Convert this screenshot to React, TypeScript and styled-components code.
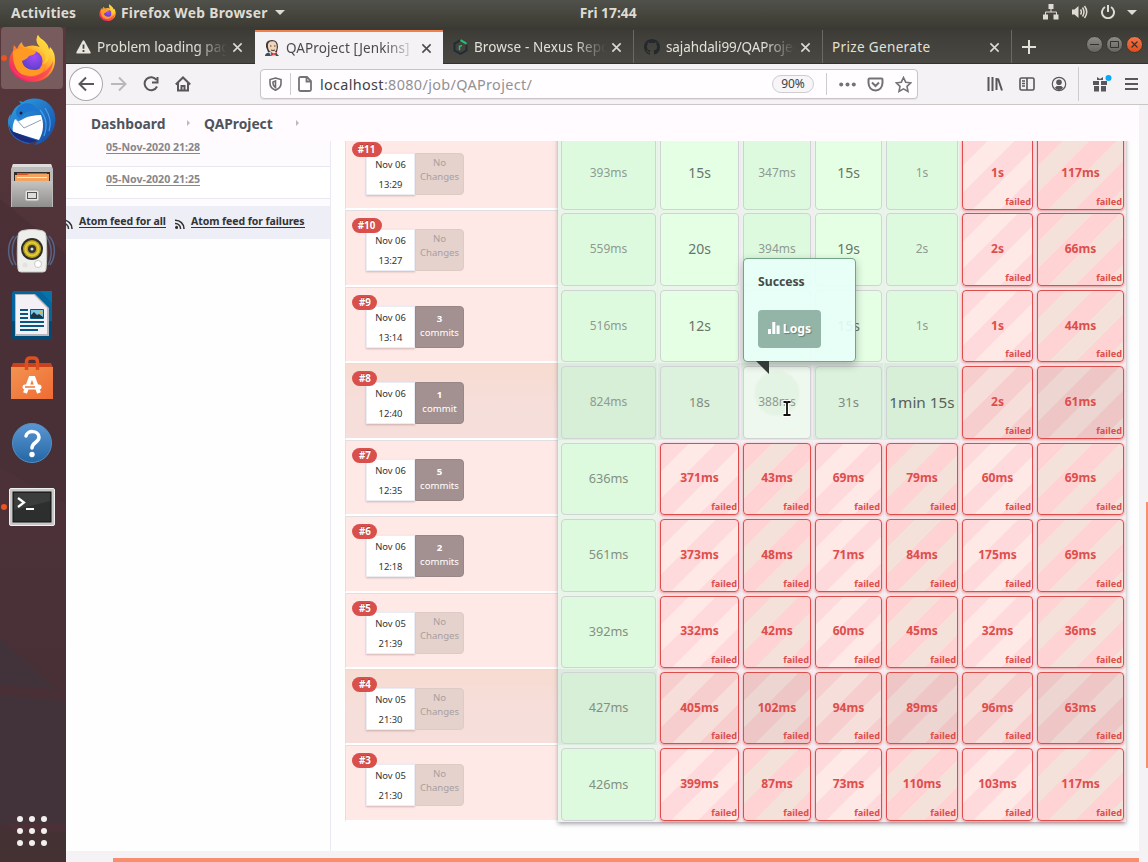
import React from "react";
import styled, { createGlobalStyle, css } from "styled-components";

const Global = createGlobalStyle`
  * { box-sizing: border-box; }
  body { margin: 0; width: 1148px; height: 862px; overflow: hidden; background: #fff; }
  body, button { font-family: "Noto Sans", "Open Sans", sans-serif; }
  svg { display: block; flex: none; }
`;

const Desktop = styled.div`
  width: 1148px;
  height: 862px;
  display: flex;
  flex-direction: column;
  overflow: hidden;
`;

const TopBar = styled.header`
  height: 27px;
  flex: none;
  display: flex;
  align-items: center;
  padding: 0 11px 3px 11px;
  background: linear-gradient(#50514a, #3c3b34);
  color: #dfdbd2;
  font-size: 13.8px;
  font-weight: 700;
  white-space: nowrap;
`;
const TopText = styled.span<{ $w: number; $ls?: number }>`
  width: ${(p) => p.$w}px;
  letter-spacing: ${(p) => p.$ls ?? 0}px;
`;
const Gap = styled.i<{ $w: number }>`
  width: ${(p) => p.$w}px;
  flex: none;
`;
const Caret = styled.i`
  border: 5px solid transparent;
  border-top-color: #dfdbd2;
  border-bottom: 0;
`;

const Main = styled.div`
  flex: 1;
  display: flex;
  min-height: 0;
`;

const Launcher = styled.nav`
  width: 66px;
  flex: none;
  display: flex;
  flex-direction: column;
  position: relative;
  background: linear-gradient(#57373b, #4e3339 30%, #4a3037 70%, #453035);
`;
const LauncherArt = styled.svg`
  position: absolute;
  left: 0;
  top: 0;
`;
const LaunchItem = styled.div<{ $active?: boolean; $running?: boolean }>`
  position: relative;
  height: 62px;
  width: 62px;
  margin: 0 1px 2.2px;
  border-radius: 4px;
  display: flex;
  align-items: center;
  justify-content: center;
  background: ${(p) => (p.$active ? "#775b5d" : "transparent")};
  ${(p) =>
    p.$running &&
    css`
      &::before {
        content: "";
        position: absolute;
        left: 0;
        width: 6px;
        height: 6px;
        border-radius: 50%;
        background: #e95420;
      }
    `}
`;
const AppsGrid = styled.div`
  position: relative;
  margin: auto 0 16px 17px;
  display: grid;
  grid-template-columns: repeat(3, 6px);
  gap: 6px;
`;
const AppDot = styled.i`
  width: 6px;
  height: 6px;
  border-radius: 50%;
  background: #f2f0ee;
`;

const Browser = styled.div`
  width: 1082px;
  display: flex;
  flex-direction: column;
`;
const TabBar = styled.div`
  height: 37px;
  flex: none;
  display: flex;
  align-items: flex-end;
  background: linear-gradient(#3a3933, #403f39 30%, #4a4842);
  border-bottom: 1px solid #33322d;
`;
const Tab = styled.div<{ $active?: boolean; $w: number; $sep?: boolean }>`
  width: ${(p) => p.$w}px;
  height: 33px;
  flex: none;
  display: flex;
  align-items: center;
  padding: 1px 12px 0 10px;
  color: #e3e0d8;
  font-size: 13.5px;
  border-right: ${(p) => (p.$sep ? "1px solid #6a6962" : "0")};
  ${(p) => p.$sep && "padding-right: 11px;"}
  ${(p) =>
    p.$active &&
    css`
      margin-bottom: -1px;
      background: #f5f2f6;
      color: #4a4a4d;
      border-top: 2px solid #f0804c;
      padding: 0 11px 0 9px;
      height: 34px;
    `}
`;
const TabTitle = styled.span<{ $fade?: boolean; $ls?: number; $bare?: boolean }>`
  flex: 1;
  margin: 0 5px 0 ${(p) => (p.$bare ? -1 : 6)}px;
  overflow: hidden;
  white-space: nowrap;
  letter-spacing: ${(p) => p.$ls ?? 0}px;
  ${(p) => p.$fade && css`mask-image: linear-gradient(90deg, #000 76%, transparent);`}
`;
const WindowButtons = styled.div`
  display: flex;
  gap: 3px;
  margin: 0 5px 10px auto;
`;
const WindowButton = styled.i<{ $close?: boolean }>`
  width: 17px;
  height: 17px;
  border-radius: 50%;
  display: flex;
  align-items: center;
  justify-content: center;
  background: ${(p) => (p.$close ? "linear-gradient(#f3764a,#e14e1b)" : "linear-gradient(#8d8c86,#66655f)")};
  border: 1px solid #3a3933;
`;

const ToolBar = styled.div`
  height: 41px;
  flex: none;
  display: flex;
  align-items: center;
  padding: 0 10px 0 3px;
  background: #f5f2f6;
  border-bottom: 1px solid #cbc7c7;
  color: #58575a;
`;
const BackButton = styled.div`
  width: 34px;
  height: 34px;
  border-radius: 50%;
  border: 1px solid #aaa7aa;
  background: #fffdff;
  display: flex;
  align-items: center;
  justify-content: center;
`;
const UrlBar = styled.div`
  width: 659px;
  height: 30px;
  margin-left: 69px;
  display: flex;
  align-items: center;
  padding: 0 5px 0 6px;
  background: #fffdff;
  border: 1px solid #c9c4c4;
  border-radius: 4px;
  box-shadow: 0 1px 1px #e4e0e4;
`;
const VLine = styled.i<{ $h: number; $l: number; $r: number }>`
  width: 1px;
  height: ${(p) => p.$h}px;
  margin: 0 ${(p) => p.$r}px 0 ${(p) => p.$l}px;
  background: #cfccd0;
  flex: none;
`;
const Url = styled.span`
  margin-left: 8px;
  flex: 1;
  font-size: 14.4px;
  letter-spacing: 0.35px;
  color: #929195;
  b { font-weight: 400; color: #414144; }
`;
const ZoomPill = styled.span`
  width: 42px;
  height: 18px;
  border: 1px solid #cfccd0;
  border-radius: 9px;
  background: #f7f5f8;
  color: #414144;
  font-size: 12px;
  line-height: 16px;
  text-align: center;
`;

const Viewport = styled.div`
  flex: 1;
  min-height: 0;
  display: grid;
  grid-template: 746px 11px / 1073px 9px;
  background: #f5f2f6;
`;
const Page = styled.div`
  display: flex;
  flex-direction: column;
  background: #fefefe;
  overflow: hidden;
`;
const Crumbs = styled.div`
  height: 36px;
  flex: none;
  display: flex;
  align-items: center;
  padding-left: 25px;
  background: #fffbff;
  color: #4d545b;
  font-size: 13.8px;
  font-weight: 700;
`;
const Crumb = styled.span<{ $w: number }>`
  width: ${(p) => p.$w}px;
  white-space: nowrap;
`;
const CrumbArrow = styled.i`
  border: 3px solid transparent;
  border-left-color: #bcb9bf;
  border-right: 0;
  margin: 0 14px 0 21px;
`;
const VTrack = styled.div`
  display: flex;
  justify-content: flex-end;
  padding-top: 397px;
`;
const VThumb = styled.i`
  width: 2px;
  height: 266px;
  background: #f78f6e;
`;
const HThumb = styled.i`
  align-self: end;
  height: 4px;
  margin-left: 47px;
  background: #f78f6e;
`;
const Columns = styled.div`
  flex: 1;
  min-height: 0;
  display: flex;
`;
const Side = styled.aside`
  width: 265px;
  flex: none;
  border-right: 1px solid #ebe9f1;
`;
const BuildLink = styled.div<{ $h: number; $plain?: boolean }>`
  height: ${(p) => p.$h}px;
  padding: ${(p) => (p.$plain ? 6 : 0)}px 0 0 40px;
  border-bottom: 1px solid #e9e8f0;
  background: ${(p) => (p.$plain ? "#fff" : "#fefbff")};
  color: #87868a;
  font-size: 10.6px;
  font-weight: 700;
  line-height: 12px;
  span { border-bottom: 1px solid #87868a; display: inline-block; white-space: nowrap; }
`;
const Spacer = styled.div`
  height: 7px;
  background: #fefbff;
`;
const Feeds = styled.div`
  height: 33px;
  display: flex;
  align-items: center;
  background: #eeeef6;
  color: #333;
  font-size: 10.5px;
  font-weight: 700;
  overflow: hidden;
  svg { margin-top: 3px; }
  svg:first-child { margin-left: -3px; }
`;
const FeedLink = styled.span<{ $w: number }>`
  width: ${(p) => p.$w}px;
  margin: -2px 9px 0 6px;
  line-height: 12px;
  border-bottom: 1px solid #333;
  white-space: nowrap;
  letter-spacing: -0.06px;
`;

const BoardClip = styled.div`
  padding-left: 14px;
  width: 808px;
  overflow: hidden;
`;
const Board = styled.div`
  width: 781px;
  margin-top: -7px;
  display: grid;
  grid-template-columns: 213px 568px;
`;
const History = styled.div`
  position: relative;
`;
const BuildRow = styled.div<{ $dark?: boolean }>`
  height: 76.43px;
  display: flex;
  flex-direction: column;
  align-items: flex-start;
  padding: 7px 0 0 6px;
  border: 1px solid #e2dfe3;
  border-bottom: 2px solid #fff;
  border-right: 0;
  background: ${(p) => (p.$dark ? "linear-gradient(#f6dcd0, #f6dedb 55%)" : "#ffe9e6")};
`;
const Badge = styled.span<{ $wide?: boolean }>`
  position: relative;
  z-index: 1;
  width: ${(p) => (p.$wide ? 30 : 25)}px;
  margin-left: ${(p) => (p.$wide ? -0.5 : 0.4)}px;
  height: 15px;
  border-radius: 8px;
  background: #d94f4b;
  color: #fff;
  font-size: 9.8px;
  font-weight: 700;
  line-height: 15px;
  text-align: center;
  text-shadow: 0 -1px 0 rgba(0, 0, 0, 0.25);
`;
const BuildInfo = styled.div`
  display: flex;
  margin: -4px 0 0 14px;
`;
const DateBox = styled.div`
  width: 49px;
  height: 42px;
  background: #fff;
  border: 1px solid #ececf4;
  box-shadow: 0 1px 2px rgba(120, 80, 80, 0.35);
  color: #333;
  font-size: 9.4px;
  line-height: 20px;
  text-align: center;
  padding-top: 1px;
`;
const Commits = styled.div<{ $none?: boolean }>`
  width: 49px;
  height: 42px;
  border-radius: 0 4px 4px 0;
  border: 1px solid ${(p) => (p.$none ? "#dfcbc6" : "#998787")};
  background: ${(p) => (p.$none ? "#e6d2cd" : "#a39191")};
  color: ${(p) => (p.$none ? "#a89f9f" : "#fff")};
  font-size: 9.6px;
  line-height: 14px;
  text-align: center;
  padding-top: ${(p) => (p.$none ? 2 : 5)}px;
  b { display: block; font-weight: ${(p) => (p.$none ? 400 : 700)}; }
`;

const Stages = styled.div`
  position: relative;
  box-shadow: 0 2px 4px rgba(90, 80, 100, 0.5);
  background: #f4f0f6;
`;
const StageRow = styled.div`
  height: 76.43px;
  display: grid;
  grid-template-columns: 100px 83px 72px 71px 76px 75px 91px;
`;
type Tone = { $fail?: boolean; $dark?: boolean; $even?: boolean; $hover?: boolean };
const okColor = (p: Tone) =>
  p.$hover ? "radial-gradient(circle at 50% 37%, #e4f4e4 21px, #eff8ee 24px)" : p.$dark ? (p.$even ? "#dcf2dc" : "#d7eed7") : p.$even ? "#e5ffe5" : "#defade";
const failBase = (p: Tone) => (p.$dark ? (p.$even ? "#f6cece" : "#efc6c6") : p.$even ? "#ffdadd" : "#ffd2d3");
const failStripe = (p: Tone) => (p.$dark ? (p.$even ? "#f6dedb" : "#edd5d2") : p.$even ? "#ffe9e6" : "#f4e2da");
const Slot = styled.div<Tone>`
  padding: 3px 1px 1px 2px;
  &:first-child { padding-left: 3px; }
  border-right: 1px solid #f3e9f3;
  background: ${(p) => (p.$fail ? "#f7eff3" : p.$dark ? "#dcebdf" : "#eaf5ea")};
`;
const Cell = styled.div<Tone>`
  position: relative;
  height: 72.5px;
  border-radius: 4px;
  display: flex;
  align-items: center;
  justify-content: center;
  border: 1px solid ${(p) => (p.$fail ? "#df4d4a" : "#d0d3d3")};
  background: ${okColor};
  ${(p) =>
    p.$fail &&
    css`
      box-shadow: 0 1px 3px rgba(217, 79, 75, 0.6);
      background: linear-gradient(-45deg, ${failStripe(p)} 25%, ${failBase(p)} 25%, ${failBase(p)} 50%, ${failStripe(p)} 50%, ${failStripe(p)} 75%, ${failBase(p)} 75%) 0 0 / 54px 54px;
    `}
`;
const Time = styled.span<{ $size: number; $fail?: boolean; $color?: string }>`
  font-size: ${(p) => p.$size}px;
  font-weight: ${(p) => (p.$fail ? 700 : 400)};
  color: ${(p) => (p.$fail ? "#dc4f4c" : p.$color)};
  white-space: nowrap;
  margin-top: -2px;
`;
const Failed = styled.span`
  position: absolute;
  right: 1px;
  bottom: 1px;
  color: #dc4f4c;
  font-size: 9.2px;
  font-weight: 700;
  line-height: 13px;
`;
const Popover = styled.div`
  position: absolute;
  z-index: 5;
  left: -1px;
  bottom: 76px;
  width: 113px;
  height: 104px;
  padding: 14px;
  border: 1px solid #74a487;
  border-radius: 4px;
  background: rgba(231, 255, 249, 0.92);
  box-shadow: 0 3px 9px rgba(0, 0, 0, 0.28);
  color: #454b48;
  font-size: 12.2px;
  font-weight: 700;
  line-height: 18px;
`;
const PopArrow = styled.i`
  position: absolute;
  left: 12px;
  top: 102px;
  border-top: 13px solid #333a37;
  border-left: 13px solid transparent;
`;
const LogsButton = styled.div`
  width: 63px;
  height: 38px;
  margin-top: 19px;
  border-radius: 4px;
  background: rgba(132, 168, 154, 0.85);
  color: #fff;
  display: flex;
  align-items: center;
  justify-content: center;
  gap: 3px;
  text-shadow: 1px 1px 1px rgba(0, 0, 0, 0.3);
`;
const Pointer = styled.svg`
  position: absolute;
  z-index: 6;
  left: 38px;
  top: 33px;
`;

const FirefoxIcon = ({ size, id }: { size: number; id: string }) => (
  <svg width={size} height={size} viewBox="0 0 48 48">
    <defs>
      <linearGradient id={`${id}a`} x1=".85" y1=".1" x2=".15" y2=".95">
        <stop offset="0" stopColor="#fff44f" /><stop offset=".35" stopColor="#ffb02e" />
        <stop offset=".65" stopColor="#ff5a36" /><stop offset="1" stopColor="#e8187c" />
      </linearGradient>
      <radialGradient id={`${id}b`} cx=".6" cy=".3" r=".8">
        <stop offset="0" stopColor="#a34cf5" /><stop offset="1" stopColor="#4a3cc4" />
      </radialGradient>
    </defs>
    <path fill={`url(#${id}a)`} d="M30 1c-3 5-1 9 2 12-5-2-10-2-15 0-2-1-3-3-3-5-3 2-4 5-5 7l-3-4c-1 3-1 4-1 6-3 4-4 8-4 12 1 11 11 19 23 19 13 0 23-9 23-22 0-6-2-10-5-13l-1 3c-1-6-3-7-6-10-3-2-4-3-5-5z" />
    <circle cx="24" cy="27" r="10.5" fill={`url(#${id}b)`} />
    <path fill="#ff9b23" d="M5 17c5-3 9-3 12-3 4 0 6 2 11 3 0 3-3 4-7 5-2 3-5 4-7 5 1 6 6 9 13 9 5 0 8-3 10-6 0 8-7 13-14 13C12 43 4 34 5 17z" />
    <path fill="#ffcf3a" d="M30 1c-3 6 0 10 4 14 4 5 5 10 1 15 7-1 8-12 4-19-3-3-7-5-9-10z" opacity=".8" />
    <path fill="#f83e5c" d="M2 27c2 10 12 15 22 15 10-1 18-7 21-15 0 11-9 19-21 19C11 46 3 38 2 27z" opacity=".7" />
  </svg>
);
const ThunderbirdIcon = () => (
  <svg width="50" height="50" viewBox="0 0 50 50">
    <defs><linearGradient id="tb" x1="0" y1="0" x2="1" y2="1"><stop offset="0" stopColor="#2fa5e8" /><stop offset="1" stopColor="#16459f" /></linearGradient></defs>
    <path fill="url(#tb)" d="M12 4c1 0 3 1 4 1C22 0 35 0 42 7c8 7 8 20 3 28-4 7-10 12-18 13l4-4-10 3C9 44 1 37 1 25c0-4 1-6 3-8l-1 5C6 12 9 9 14 7z" />
    <path fill="#fff" d="M8 22c3 3 5 2 8 0 5-3 12-4 18-4 3 8 3 16-2 25L6 35c-1-4 0-9 2-13z" />
    <path fill="none" stroke="#8fa0b4" strokeWidth="1" d="M9 22l8 9 17-8" />
    <path fill="#1d2b7c" d="M2 27c1 5 3 7 5 8l24 9-8 2C9 44 2 36 2 27z" />
    <path fill="#1d76d0" d="M14 8C8 12 8 17 11 20c2 2 4 0 5-2 4-4 10-5 18-3l-9-8c-4-1-8-1-11 1z" />
    <circle cx="14" cy="16" r="1.5" fill="#223" />
    <path fill="none" stroke="#3f9ff0" strokeWidth="1.2" d="M33 13c7 8 7 18 4 26M38 11c6 9 6 17 4 23" />
  </svg>
);
const FilesIcon = () => (
  <svg width="44" height="46" viewBox="0 0 44 46">
    <defs><linearGradient id="fl" x1="0" y1="0" x2="0" y2="1"><stop offset="0" stopColor="#c5c4c2" /><stop offset="1" stopColor="#8f8e8c" /></linearGradient></defs>
    <path fill="#bdbcba" d="M3 1h38l2 5v38H1V6z" /><path fill="#dddcda" d="M3 1h38l1 3H2z" />
    <path fill="#302d2b" d="M4 9h36v10H4z" /><path fill="#d9541f" d="M7 10h30v5H7z" />
    <path fill="#f4a35e" d="M5 12h12l2-1h20v9H5z" /><path fill="#fff" opacity=".8" d="M7 14h30v1H7z" />
    <rect x="2" y="18" width="40" height="26" fill="url(#fl)" />
    <rect x="15" y="27" width="14" height="11" rx="2" fill="#e7e6e4" stroke="#a3a2a0" />
    <rect x="17.500" y="29.500" width="9" height="6" fill="#ddd" stroke="#55534f" />
  </svg>
);
const RhythmboxIcon = () => (
  <svg width="50" height="44" viewBox="0 0 50 44">
    <g fill="none" stroke="#596383" strokeWidth="1.500"><path d="M7 7C0 14 0 28 6 36M10 7C4 14 4 28 9 36M42 7c7 7 7 21 1 29M39 7c6 8 7 20 2 29" /></g>
    <path fill="#eeeeec" stroke="#c8c8c4" d="M14 2c7-2 15-2 22 0q3 1 3 5c1 12 1 23 0 33q0 3-3 3H14q-3 0-3-3c-1-10-1-21 0-33q0-4 3-5z" />
    <circle cx="25" cy="20" r="11" fill="#2d2d2b" /><circle cx="25" cy="20" r="9" fill="#bca218" />
    <circle cx="25" cy="20" r="6.500" fill="none" stroke="#e1ca3b" strokeWidth="2" /><circle cx="25" cy="20" r="4" fill="#333" /><circle cx="25" cy="20" r="1.500" fill="#ddd" />
    <circle cx="31" cy="35" r="3.500" fill="#fff" stroke="#bbb" strokeWidth=".8" /><circle cx="18" cy="36" r="2.500" fill="#e2e2df" />
  </svg>
);
const WriterIcon = () => (
  <svg width="40" height="48" viewBox="0 0 40 48">
    <path fill="#05659e" d="M3 0h37v46q0 2-2 2H2q-2 0-2-2V3q0-3 3-3z" /><path fill="#024a76" d="M0 30h40v16q0 2-2 2H2q-2 0-2-2z" />
    <path fill="#b9b8bd" d="M3 3h20l14 14v28H3z" /><path fill="#f3f1f5" d="M4 4h18l13 13v26H4z" /><path fill="#0872ab" d="M28 0h12v12z" />
    <path stroke="#075782" strokeWidth="2" d="M8 19h8M8 23h8M8 27h8M8 31h24M8 35h24M8 39h18" />
    <path fill="#7cc6e6" stroke="#075782" d="M18.500 18.500h13v9h-13z" /><path fill="#23343d" d="M19 27v-3l3-3 3 3 2-1 4 3v1z" /><circle cx="29" cy="21" r="1.500" fill="#e7b93a" />
  </svg>
);
const StoreIcon = () => (
  <svg width="44" height="46" viewBox="0 0 44 46">
    <defs><linearGradient id="st" x1="0" y1="0" x2="1" y2="1"><stop offset="0" stopColor="#f29350" /><stop offset="1" stopColor="#ef6b34" /></linearGradient></defs>
    <path fill="#c9421b" d="M3 7h38l2 5H1z" /><path fill="url(#st)" d="M1 11h42v32H1z" />
    <path fill="none" stroke="#dd4f20" strokeWidth="3.500" d="M16.500 14V6q0-4 4-4h3q4 0 4 4v8" />
    <path fill="none" stroke="#fff" strokeWidth="4" d="M15 37l5.500-15h3L29 37" /><path stroke="#fff" strokeWidth="5" strokeLinecap="round" d="M15 31h14" /><path stroke="#f0743b" strokeWidth="1.500" d="M15 31h10" />
  </svg>
);
const HelpIcon = () => (
  <svg width="42" height="42" viewBox="0 0 42 42">
    <defs><linearGradient id="hp" x1="0" y1="0" x2="0" y2="1"><stop offset="0" stopColor="#5b97d2" /><stop offset="1" stopColor="#2467a5" /></linearGradient></defs>
    <circle cx="21" cy="21" r="19.500" fill="url(#hp)" stroke="#5290c4" />
    <path fill="none" stroke="#fff" strokeWidth="3.500" strokeLinecap="round" d="M15 14c1-6 12.500-6 13 1 0 6-7 5-7 11" /><circle cx="21" cy="32.500" r="2.700" fill="#fff" />
  </svg>
);
const TerminalIcon = () => (
  <svg width="46" height="38" viewBox="0 0 46 38">
    <rect x=".5" y=".5" width="45" height="37" rx="1.500" fill="#c9c8c8" stroke="#efefef" /><rect x="4" y="4" width="38" height="30" fill="#2c2f2d" stroke="#111" />
    <path fill="#454846" d="M5 5h36v8L5 22z" opacity=".6" /><path fill="none" stroke="#fff" strokeWidth="2.200" d="M9 10l6 4.500L9 19" /><path stroke="#fff" strokeWidth="2" d="M17 21h8" />
  </svg>
);

const Cross = ({ color }: { color: string }) => (
  <svg width="11" height="11" viewBox="0 0 12 12"><path d="M1.500 1.500l9 9M10.500 1.500l-9 9" stroke={color} strokeWidth="1.700" /></svg>
);
const WarnIcon = () => (
  <svg width="15" height="14" viewBox="0 0 14 14"><path fill="#e8e5de" d="M6 1q1-1.500 2 0l6 11q.5 1.500-1 1.500H1q-1.500 0-1-1.500z" /><path stroke="#45443d" strokeWidth="1.800" d="M7 4.500v4.200M7 10v1.900" /></svg>
);
const JenkinsIcon = () => (
  <svg width="16" height="16" viewBox="0 0 16 16">
    <path fill="#3c3a3b" d="M2 7Q1 0 8 0q6 0 6 7l-1 5H4z" /><path fill="#f0d6b7" d="M4 7Q3 1.200 8.500 1.200 12.800 1 12.800 7q0 5-4 5.500Q4.500 12 4 7z" /><path fill="#c9c6c8" d="M3 13l4-1 2 2 3-2 3 4H1z" />
    <path fill="#d33833" d="M7 12l3 1.500 3-1.500v4l-3-1.500-3 1.500z" /><path stroke="#49393a" strokeWidth="1" fill="none" d="M6 6h1.500M10 6h1.500M7 10q2 1 4 0" /><path fill="#335061" d="M1 16q0-3 4-3.500L7 16zM12 13l3 3h-3z" />
  </svg>
);
const NexusIcon = () => (
  <svg width="15" height="16" viewBox="0 0 15 16"><path fill="none" stroke="#222c35" strokeWidth="2" d="M7.500 1.200l-6 3.400v6.800l6 3.400 6-3.400V6" /><path stroke="#2bbf74" strokeWidth="2" d="M7.500 1.200l6 3.400" /><path fill="none" stroke="#2bbf74" strokeWidth="1.400" d="M6.500 11V6.500M6.500 8q.8-1.500 2.500-1.200" /></svg>
);
const GithubIcon = () => (
  <svg width="16" height="16" viewBox="0 0 16 16"><path fill="#24292e" d="M8 0C3.580 0 0 3.580 0 8c0 3.540 2.290 6.530 5.470 7.590.4.070.55-.17.55-.38 0-.19-.01-.82-.01-1.490-2.010.37-2.530-.49-2.690-.94-.09-.23-.48-.94-.82-1.130-.28-.15-.68-.52-.01-.53.63-.01 1.080.58 1.230.82.72 1.210 1.870.87 2.330.66.070-.52.28-.87.51-1.070-1.780-.2-3.640-.89-3.640-3.950 0-.87.31-1.590.82-2.150-.08-.2-.36-1.020.08-2.120 0 0 .67-.21 2.200.82a7.600 7.600 0 0 1 4 0c1.530-1.040 2.200-.82 2.200-.82.44 1.100.16 1.920.08 2.120.51.56.82 1.270.82 2.150 0 3.070-1.870 3.750-3.650 3.950.29.25.54.73.54 1.480 0 1.070-.01 1.930-.01 2.200 0 .21.15.46.55.38A8.010 8.010 0 0 0 16 8c0-4.420-3.580-8-8-8z" /></svg>
);
const Line = ({ d, w = 16, h = 16, sw = 2, color = "currentColor", fill = "none" }: { d: string; w?: number; h?: number; sw?: number; color?: string; fill?: string }) => (
  <svg width={w} height={h} viewBox={`0 0 ${w} ${h}`} fill={fill} stroke={color} strokeWidth={sw}><path d={d} /></svg>
);
const RssIcon = () => (
  <svg width="10" height="10" viewBox="0 0 10 10" fill="none" stroke="#333" strokeWidth="1.500"><path d="M0 1.200A8.500 8.500 0 0 1 9 10M0 4.600A5 5 0 0 1 5.500 10" /><circle cx="1.600" cy="8.400" r=".8" fill="#333" /></svg>
);

const columns = ["checkout", "build", "test", "image", "push", "deploy", "post"];
type Build = { id: number; day: string; time: string; commits: number; times: string[]; failFrom: number; dark?: boolean; hover?: number };
const builds: Build[] = [
  { id: 11, day: "Nov 06", time: "13:29", commits: 0, times: ["393ms", "15s", "347ms", "15s", "1s", "1s", "117ms"], failFrom: 5 },
  { id: 10, day: "Nov 06", time: "13:27", commits: 0, times: ["559ms", "20s", "394ms", "19s", "2s", "2s", "66ms"], failFrom: 5 },
  { id: 9, day: "Nov 06", time: "13:14", commits: 3, times: ["516ms", "12s", "317ms", "15s", "1s", "1s", "44ms"], failFrom: 5 },
  { id: 8, day: "Nov 06", time: "12:40", commits: 1, times: ["824ms", "18s", "388ms", "31s", "1min 15s", "2s", "61ms"], failFrom: 5, dark: true, hover: 2 },
  { id: 7, day: "Nov 06", time: "12:35", commits: 5, times: ["636ms", "371ms", "43ms", "69ms", "79ms", "60ms", "69ms"], failFrom: 1 },
  { id: 6, day: "Nov 06", time: "12:18", commits: 2, times: ["561ms", "373ms", "48ms", "71ms", "84ms", "175ms", "69ms"], failFrom: 1 },
  { id: 5, day: "Nov 05", time: "21:39", commits: 0, times: ["392ms", "332ms", "42ms", "60ms", "45ms", "32ms", "36ms"], failFrom: 1 },
  { id: 4, day: "Nov 05", time: "21:30", commits: 0, times: ["427ms", "405ms", "102ms", "94ms", "89ms", "96ms", "63ms"], failFrom: 1, dark: true },
  { id: 3, day: "Nov 05", time: "21:30", commits: 0, times: ["426ms", "399ms", "87ms", "73ms", "110ms", "103ms", "117ms"], failFrom: 1 },
];

const timeStyle = (text: string, col: number, id: number) => {
  if (text.includes("min")) return { size: 15.3, color: "#56605a" };
  if (col === 1 || col === 3) return { size: id === 8 ? 13 : 14, color: id === 8 ? "#7f8b82" : "#6a746b" };
  if (col === 0 && id < 8) return { size: 12.7, color: "#839083" };
  return { size: 12, color: "#8f9b90" };
};

const StageCell = ({ build, col }: { build: Build; col: number }) => {
  const fail = col >= build.failFrom;
  const even = col % 2 === 1;
  const hover = build.hover === col;
  const text = build.times[col];
  const t = timeStyle(text, col, build.id);
  return (
    <Slot $fail={fail} $dark={build.dark}>
      <Cell $fail={fail} $dark={build.dark} $even={even} $hover={hover}>
        <Time $size={fail ? 12.1 : t.size} $fail={fail} $color={t.color}>{text}</Time>
        {fail && <Failed>failed</Failed>}
        {hover && (
          <>
            <Popover>
              Success
              <LogsButton>
                <svg width="12" height="13" viewBox="0 0 12 13" fill="#fff"><path d="M0 7h3v5H0zM4.300 0h3v12h-3zM8.600 3.500h3V12h-3z" /></svg>
                Logs
              </LogsButton>
              <PopArrow />
            </Popover>
            <Pointer width="10" height="17" viewBox="0 0 10 17">
              <path d="M1 2h3l1 1 1-1h3M5 3v11M1 15h3l1-1 1 1h3" fill="none" stroke="#fff" strokeWidth="4" />
              <path d="M1.500 2h2.500l1 1 1-1h2.500M5 3v11M1.500 15H4l1-1 1 1h2.500" fill="none" stroke="#111" strokeWidth="1.800" />
            </Pointer>
          </>
        )}
      </Cell>
    </Slot>
  );
};

export default function App() {
  return (
    <Desktop>
      <Global />
      <TopBar>
        <TopText $w={88} $ls={0.1}>Activities</TopText>
        <FirefoxIcon size={17} id="s" />
        <Gap $w={5} />
        <TopText $w={154} $ls={0.3}>Firefox Web Browser</TopText>
        <Caret />
        <Gap $w={295} />
        <TopText $w={464}>Fri 17:44</TopText>
        <svg width="16" height="16" viewBox="0 0 16 16" fill="#dfdbd2"><path d="M5.500 0h5v5h-5zM0 10.500h5v5H0zM10.500 10.500h5v5h-5z" /><path d="M8 5v3M2.500 11V8h11v3" fill="none" stroke="#dfdbd2" /></svg>
        <Gap $w={13} />
        <svg width="16" height="14" viewBox="0 0 16 14"><path fill="#dfdbd2" d="M0 4.500h2.500L6.500 1v12l-4-3.500H0z" /><path d="M8.500 4.500q1.800 2.500 0 5M10.500 2.500q3 4.500 0 9M12.500 1q4.500 6 0 12" fill="none" stroke="#dfdbd2" strokeWidth="1.500" /></svg>
        <Gap $w={13} />
        <svg width="14" height="14" viewBox="0 0 14 14" fill="none" stroke="#dfdbd2" strokeWidth="2"><path d="M4 2a6 6 0 1 0 6 0M7 0v7" /></svg>
        <Gap $w={12} />
        <Caret />
      </TopBar>
      <Main>
        <Launcher>
          <LauncherArt width="66" height="835" viewBox="0 0 66 835">
            <path fill="#472f36" opacity=".6" d="M0 172l55 45 11 10v250L0 440z" />
            <path fill="#423239" d="M0 611l57 51L0 658zM0 668l66 6v123H0z" /><path fill="#4b3038" d="M8 797h58v8H17z" /><path fill="#443133" d="M0 805h66v30H0z" />
          </LauncherArt>
          <LaunchItem $active $running><FirefoxIcon size={48} id="l" /></LaunchItem>
          <LaunchItem><ThunderbirdIcon /></LaunchItem>
          <LaunchItem><FilesIcon /></LaunchItem>
          <LaunchItem><RhythmboxIcon /></LaunchItem>
          <LaunchItem><WriterIcon /></LaunchItem>
          <LaunchItem><StoreIcon /></LaunchItem>
          <LaunchItem><HelpIcon /></LaunchItem>
          <LaunchItem $running><TerminalIcon /></LaunchItem>
          <AppsGrid>{Array.from({ length: 9 }, (_, i) => <AppDot key={i} />)}</AppsGrid>
        </Launcher>
        <Browser>
          <TabBar>
            <Tab $w={189}><WarnIcon /><TabTitle $fade>Problem loading page</TabTitle><Cross color="#dedbd3" /></Tab>
            <Tab $w={188} $active><JenkinsIcon /><TabTitle $fade $ls={0.1}>QAProject [Jenkins]</TabTitle><Cross color="#4c4c50" /></Tab>
            <Tab $w={191} $sep><NexusIcon /><TabTitle $fade $ls={0.1}>Browse - Nexus Repository</TabTitle><Cross color="#dedbd3" /></Tab>
            <Tab $w={189} $sep><GithubIcon /><TabTitle $fade $ls={-0.1}>sajahdali99/QAProject</TabTitle><Cross color="#dedbd3" /></Tab>
            <Tab $w={189} $sep><TabTitle $bare $ls={0.35}>Prize Generate</TabTitle><Cross color="#dedbd3" /></Tab>
            <Tab $w={40}><Line w={14} h={14} color="#e3e0d8" d="M7 0v14M0 7h14" /></Tab>
            <WindowButtons>
              <WindowButton><Line w={9} h={9} sw={1} color="#34332e" d="M0 4.500h9" /></WindowButton>
              <WindowButton><Line w={9} h={7} sw={1} color="#34332e" d="M.5.5h8v6h-8z" /></WindowButton>
              <WindowButton $close><Line w={7} h={7} sw={1.2} color="#34332e" d="M.5.5l6 6M6.500.5l-6 6" /></WindowButton>
            </WindowButtons>
          </TabBar>
          <ToolBar>
            <BackButton><Line d="M16 8H2M8 1.500L1.500 8 8 14.500" /></BackButton>
            <Gap $w={8} />
            <Line color="#bab8bc" d="M0 8h14M8 1.500L14.500 8 8 14.500" />
            <Gap $w={16} />
            <Line d="M13.500 4A6.500 6.500 0 1 0 14 10.500M14.500 1v5.500H9" />
            <Gap $w={16} />
            <Line d="M.8 8.500L8 1.500l7.200 7M3 7v7.500h10V7M6.500 14v-4h3v4" />
            <UrlBar>
              <Gap $w={2} />
              <Line w={13} h={14} sw={1.6} color="#6e6d71" d="M6.500 1L12 2.500v4Q12 11 6.500 13.200 1 11 1 6.500v-4zM6.500 4v6.500Q4 9 4 6.500V5z" />
              <VLine $h={22} $l={8} $r={7} />
              <Line w={14} h={16} sw={1.8} color="#747377" d="M2.500 1H9l4 4v8.500q0 1.500-1.500 1.500h-9Q1 15 1 13.500v-11Q1 1 2.500 1zM8.500 1v4.500H13" />
              <Url><b>localhost</b>:8080/job/QAProject/</Url>
              <ZoomPill>90%</ZoomPill>
              <VLine $h={22} $l={12} $r={12} />
              <svg width="17" height="5" viewBox="0 0 17 5" fill="#737276"><circle cx="2.200" cy="2.500" r="2" /><circle cx="8.500" cy="2.500" r="2" /><circle cx="14.800" cy="2.500" r="2" /></svg>
              <Gap $w={11} />
              <Line w={17} h={15} color="#737276" d="M2.500 1.500h12q1 0 1 1V6Q15 13 8.500 13.500 2 13 1.500 6V2.500q0-1 1-1zM5 5.500L8.500 9 12 5.500" />
              <Gap $w={11} />
              <Line w={17} h={17} sw={1.6} color="#737276" d="M8.500 1.500l2.200 4.700 5 .6-3.700 3.500 1 5.100-4.500-2.500L4 15.400l1-5.100L1.300 6.800l5-.6z" />
            </UrlBar>
            <Gap $w={69} />
            <Line w={16} h={14} d="M1.500 0v14M5.500 0v14M9.500 1v12M11 1.500L15 13.500" />
            <Gap $w={16} />
            <Line w={16} h={14} d="M2.500 1h11Q15 1 15 2.500v9q0 1.500-1.500 1.500h-11Q1 13 1 11.500v-9Q1 1 2.500 1zM8 1v12M3 4h3M3 6.500h3M3 9h3" sw={1.6} />
            <Gap $w={16} />
            <svg width="16" height="16" viewBox="0 0 16 16"><circle cx="8" cy="8" r="6.700" fill="none" stroke="#58575a" strokeWidth="1.200" /><circle cx="8" cy="6.300" r="2.800" fill="#58575a" /><path fill="#58575a" d="M3.500 11q1.500 1 2-1h5q.5 2 2 1-1.500 3-4.500 3t-4.500-3z" /></svg>
            <VLine $h={34} $l={11} $r={14} />
            <svg width="19" height="18" viewBox="0 0 19 18"><path fill="#58575a" d="M0 6h6v4H0zM8 6h6v4H8zM1 11h5v5.500H1zM8 11h5v5.500H8zM4 2l3 2 3-2v3H4z" /><circle cx="15.500" cy="3" r="3" fill="#0aa9f5" /></svg>
            <Gap $w={13} />
            <Line w={13} h={12} d="M0 1h13M0 6h13M0 11h13" />
          </ToolBar>
          <Viewport>
            <Page>
              <Crumbs>
                <Crumb $w={75}>Dashboard</Crumb><CrumbArrow /><Crumb $w={71}>QAProject</Crumb><CrumbArrow />
              </Crumbs>
              <Columns>
                <Side>
                  <BuildLink $h={26}><span>05-Nov-2020 21:28</span></BuildLink>
                  <BuildLink $h={32} $plain><span>05-Nov-2020 21:25</span></BuildLink>
                  <Spacer />
                  <Feeds>
                    <RssIcon /><FeedLink $w={87}>Atom feed for all</FeedLink>
                    <RssIcon /><FeedLink $w={114}>Atom feed for failures</FeedLink>
                  </Feeds>
                </Side>
                <BoardClip>
                  <Board>
                    <History>
                      {builds.map((b) => (
                        <BuildRow key={b.id} $dark={b.dark}>
                          <Badge $wide={b.id > 9}>#{b.id}</Badge>
                          <BuildInfo>
                            <DateBox>{b.day}<br />{b.time}</DateBox>
                            <Commits $none={!b.commits}>
                              <b>{b.commits || "No"}</b>
                              {b.commits === 0 ? "Changes" : b.commits === 1 ? "commit" : "commits"}
                            </Commits>
                          </BuildInfo>
                        </BuildRow>
                      ))}
                    </History>
                    <Stages>
                      {builds.map((b) => (
                        <StageRow key={b.id}>{columns.map((c, i) => <StageCell key={c} build={b} col={i} />)}</StageRow>
                      ))}
                    </Stages>
                  </Board>
                </BoardClip>
              </Columns>
            </Page>
            <VTrack><VThumb /></VTrack>
            <HThumb />
          </Viewport>
        </Browser>
      </Main>
    </Desktop>
  );
}
